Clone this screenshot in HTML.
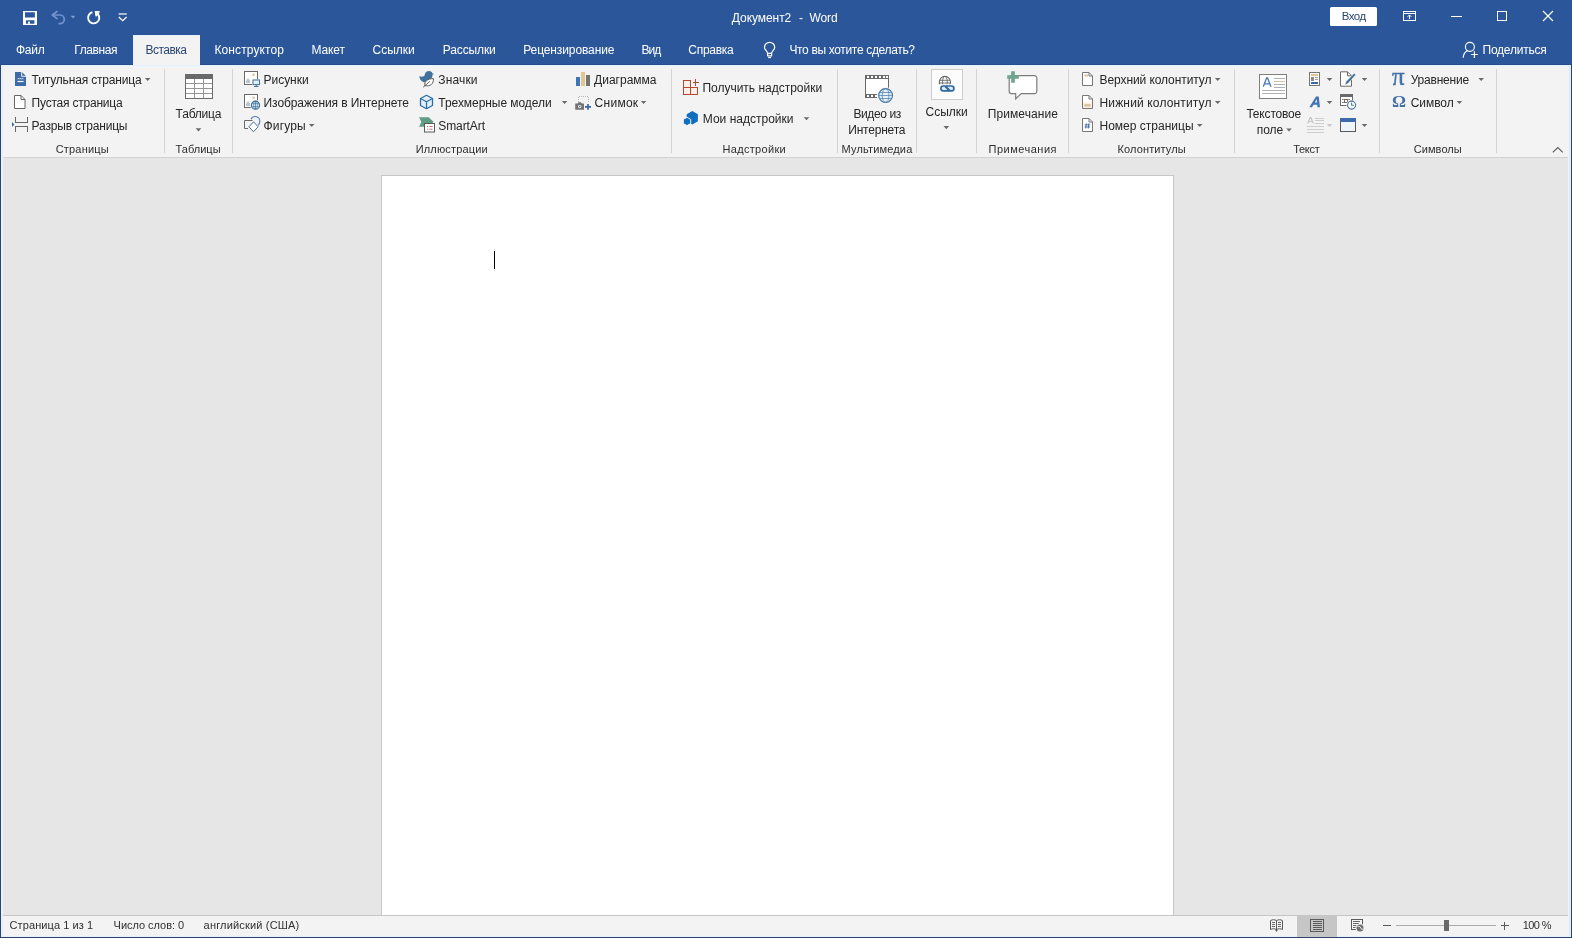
<!DOCTYPE html>
<html><head><meta charset="utf-8"><title>Word</title>
<style>
html,body{margin:0;padding:0}
body{width:1572px;height:938px;position:relative;overflow:hidden;background:#e6e6e6;font-family:"Liberation Sans",sans-serif}
.a{position:absolute}
.t{position:absolute;white-space:pre;line-height:1;font-family:"Liberation Sans",sans-serif}
#title{left:0;top:0;width:1572px;height:65px;background:#2b579a}
#tab{left:133px;top:35px;width:67px;height:30px;background:#f3f3f3;box-shadow:inset 1px 1px 0 #e6f1fb,inset -1px 0 0 #ecf3fa}
#ribbon{left:1px;top:65px;width:1570px;height:92px;background:#f3f3f3}
#rline{left:1px;top:157px;width:1570px;height:1px;background:#d2d2d2}
#page{left:381px;top:175px;width:791px;height:740px;background:#fff;border:1px solid #c6c6c6;border-bottom:none}
#sline{left:1px;top:915px;width:1570px;height:1px;background:#c6c6c6}
#status{left:1px;top:916px;width:1570px;height:21px;background:#f3f3f3}
#bl{left:0;top:65px;width:1px;height:873px;background:#2b4570}
#br{left:1571px;top:65px;width:1px;height:873px;background:#2b4570}
#bb{left:0;top:937px;width:1572px;height:1px;background:#2b4570}
.sep{position:absolute;top:69px;width:1px;height:84px;background:#d4d4d4}
#caret{left:494px;top:251px;width:1px;height:18px;background:#000}
svg{position:absolute;overflow:visible}
.sym{will-change:transform;position:absolute;line-height:1;font-family:"Liberation Serif",serif;color:#4472a8;white-space:pre}
#txt{position:absolute;left:0;top:0;width:1572px;height:938px;will-change:transform}

</style></head>
<body>
<div class="a" id="title"></div>
<div class="a" id="tab"></div>
<div class="a" id="ribbon"></div>
<div class="a" id="rline"></div>
<div class="a" id="page"></div>
<div class="a" id="caret"></div>
<div class="a" id="sline"></div>
<div class="a" id="status"></div>
<div class="a" style="left:1px;top:65px;width:1570px;height:1px;background:#e4f1fc"></div>
<div class="a" style="left:1px;top:66px;width:1570px;height:1px;background:#eef5fb"></div>
<div class="a" style="left:1px;top:65px;width:2px;height:872px;background:#e6f1fb"></div>
<div class="a" style="left:1568px;top:65px;width:3px;height:872px;background:linear-gradient(90deg,#edf3f9,#dce9f6)"></div>
<div class="a" style="left:1px;top:936px;width:1570px;height:1px;background:#e4f0fb"></div>
<div class="a" style="left:0;top:64px;width:1572px;height:1px;background:#274f90"></div>
<div class="a" style="left:133px;top:64px;width:67px;height:1px;background:#f3f3f3"></div>
<div class="a" id="bl"></div><div class="a" id="br"></div><div class="a" id="bb"></div>
<span class="sym" id="pi" style="left:1391.500px;top:64px;font-size:25px;font-weight:normal;-webkit-text-stroke:.45px #4472a8">π</span>
<span class="sym" id="om" style="left:1392px;top:92.500px;font-size:17.500px;font-weight:bold">Ω</span>
<div class="sep" style="left:164px"></div><div class="sep" style="left:232px"></div><div class="sep" style="left:671px"></div><div class="sep" style="left:837px"></div><div class="sep" style="left:916px"></div><div class="sep" style="left:976px"></div><div class="sep" style="left:1068px"></div><div class="sep" style="left:1234px"></div><div class="sep" style="left:1379px"></div><div class="sep" style="left:1496px"></div><svg class="a" style="left:0;top:0" width="1572" height="938" viewBox="0 0 1572 938" fill="none">
<!-- ===== title bar: QAT ===== -->
<g id="save" fill="#fff">
  <path d="M23 11h14v14H23z M25 12.300v5.300h9.900v-5.300z M26 20.200v3.500h8.400v-3.500z" fill-rule="evenodd"/>
  <rect x="28" y="21.600" width="2" height="2.200"/>
</g>
<g id="undo" stroke="#7394d0" stroke-width="1.700" stroke-linecap="round" stroke-linejoin="round">
  <path d="M57 11.400L52.300 15L57 18.600"/>
  <path d="M52.800 15H60a4.300 4.300 0 0 1 0 8.600h-.8"/>
</g>
<path d="M70.6 15.8h4.8l-2.4 2.8z" fill="#7f9ccf"/>
<g id="redo" stroke="#fff" stroke-width="1.900" fill="none">
  <path d="M92.400 12.300a5.600 5.600 0 1 0 5.400 1.700"/>
  <path d="M99.600 11.900h-3.800l.6 4.400" stroke-linejoin="miter" stroke-width="1.900"/>
  <path d="M95.800 11.900l2.600 2.600" stroke-width="2.200"/>
</g>
<g id="qat" stroke="#fff" stroke-width="1.2">
  <path d="M118.6 14h8.2"/>
  <path d="M118.8 17l3.9 3.7l3.9-3.7"/>
</g>
<!-- sign-in button -->
<rect x="1330" y="7" width="47" height="19" rx="1.5" fill="#fff"/>
<!-- ribbon display options -->
<g stroke="#fff" stroke-width="1" shape-rendering="crispEdges">
  <rect x="1403.5" y="11.5" width="12" height="9"/>
  <path d="M1403.5 13.5h12"/>
</g>
<path d="M1409.5 19.2v-4 M1407.6 16.8l1.9-1.9l1.9 1.9" stroke="#fff" stroke-width="1"/>
<!-- window controls -->
<path d="M1451 16.5h10.5" stroke="#fff" stroke-width="1" shape-rendering="crispEdges"/>
<rect x="1497.5" y="11.5" width="9" height="9" stroke="#fff" stroke-width="1" shape-rendering="crispEdges"/>
<path d="M1543 11l10 10M1553 11l-10 10" stroke="#fff" stroke-width="1.1"/>
<!-- lightbulb -->
<g stroke="#fff" stroke-width="1.2" stroke-linejoin="round">
  <path d="M767.600 53.400c0-2.200-3.100-3.300-3.100-6a5.100 5.100 0 0 1 10.200 0c0 2.700-3.100 3.800-3.100 6z"/>
  <path d="M767.6 53.4v2.4h4v-2.4"/>
  <path d="M768.2 57.5h2.9"/>
</g>
<!-- share -->
<g stroke="#fff" stroke-width="1.15">
  <circle cx="1469.9" cy="46.8" r="4.5"/>
  <path d="M1467.4 50.8c-2.6 1.2-4 3.8-4.2 7"/>
  <path d="M1471.2 54.5h6.5M1474.4 51.3v6.6"/>
</g>
<!-- ===== ribbon: Pages ===== -->
<!-- cover page -->
<path d="M15 72h6.200v4.800h4.800V86H15z" fill="#3f6aa8"/>
<path d="M22.200 72.300l3.500 3.500h-3.500z" fill="#3f6aa8"/>
<path d="M17.5 79.2l1-1l1 1l1-1l1 1l1-1l1 1" stroke="#fff" stroke-width=".9" fill="none"/>
<path d="M17.5 81.5h6" stroke="#fff" stroke-width="1.2"/>
<!-- blank page -->
<path d="M14.5 95.5h6.5l4 4v9H14.5z" fill="#fff" stroke="#666" stroke-width="1"/>
<path d="M21 95.5v4h4" stroke="#666" stroke-width="1"/>
<!-- page break -->
<g stroke="#666" stroke-width="1" shape-rendering="crispEdges">
  <path d="M15.5 117v5.5h12V117"/>
  <path d="M15.5 132v-5.500h12V132"/>
</g>
<path d="M12 122l2.400 2.500L12 127z" fill="#3f6aa8"/>
<!-- ===== Table ===== -->
<g shape-rendering="crispEdges">
  <rect x="185" y="74" width="28" height="25" fill="#fff"/>
  <rect x="185" y="74" width="28" height="5" fill="#6a6a6a"/>
  <path d="M185.500 74v24.500h27V74" stroke="#6a6a6a"/>
  <path d="M186 83.500h26M186 88.500h26M186 93.500h26M194.500 79v19M203.500 79v19" stroke="#969696"/>
</g>
<!-- ===== Illustrations ===== -->
<!-- pictures -->
<g id="pic1">
  <rect x="244.500" y="71.500" width="13" height="13" fill="#fff" stroke="#6a6a6a"/>
  <path d="M246 83v-2.200l2-2.800l2.200 2.800v2.200z" fill="#b8c4d2"/>
  <circle cx="253.500" cy="74.700" r="1.300" fill="#d9c39b"/>
  <rect x="252" y="79.200" width="8.400" height="7" fill="#f3f3f3"/>
  <rect x="253" y="80" width="6.500" height="4.600" fill="#e3f0fb" stroke="#41719c"/>
  <path d="M256.200 84.600v1.600M254 86.500h4.500" stroke="#41719c"/>
</g>
<!-- online pictures -->
<g id="pic2">
  <rect x="244.500" y="94.500" width="13" height="13" fill="#fff" stroke="#6a6a6a"/>
  <path d="M246 106v-2.200l2-2.800l2.200 2.800v2.200z" fill="#b8c4d2"/>
  <circle cx="253.500" cy="97.700" r="1.300" fill="#d9c39b"/>
  <circle cx="255.500" cy="105.200" r="5.400" fill="#f3f3f3"/>
  <circle cx="255.500" cy="105.200" r="4.100" fill="#dcebf7" stroke="#41719c" stroke-width="1.100"/>
  <path d="M251.700 103.700h7.600M251.700 106.700h7.600M255.500 101v8.400" stroke="#41719c" stroke-width=".7"/>
  <ellipse cx="255.500" cy="105.200" rx="2" ry="4.100" stroke="#41719c" stroke-width=".6"/>
</g>
<!-- shapes -->
<g id="shapes">
  <path d="M252.500 120.500h-8v8h3.500" stroke="#6a6a6a"/>
  <path d="M251 119.200a4.600 4.600 0 0 1 8.600 3.200a6 6 0 0 1 -1.600 3" stroke="#5a7fb0" stroke-width="1.200"/>
  <path d="M253.500 121.800l4.600 5l-4.600 5l-4.600-5z" fill="#fff" stroke="#41719c" stroke-width="1"/>
</g>
<!-- icons (bird + leaf) -->
<g id="iconsicon">
  <path d="M419.300 76.200c1.800.8 3.600.6 5.200-.4c.2-2.800 2-4.800 4.600-4.800c1.800 0 3 1 3.400 2.400l1.400.6l-1.400.8c0 4.400-3.400 7.400-7.400 7.400c-3.200 0-5.400-2.600-5.800-6z" fill="#41719c"/>
  <path d="M424.800 85.600c-.6-4 2.600-7 8.600-7c.4 5.200-3.200 8.200-8.600 7z" fill="#fff" stroke="#5a5a5a" stroke-width="1"/>
  <path d="M423.200 87.200l6.600-5.800" stroke="#5a5a5a" stroke-width="1"/>
</g>
<!-- 3d models -->
<g id="cube" stroke="#2e6ca4" stroke-width="1.300" stroke-linejoin="round">
  <path d="M426.500 95.300l6 3.200v7l-6 3.200l-6-3.200v-7z" fill="#e2f0fb"/>
  <path d="M420.500 98.500l6 3.200l6-3.200M426.500 101.700v7" />
</g>
<!-- smartart -->
<g id="smartart">
  <path d="M419 117.200h9.600l5 4.600l-1.800 1.800h-7.400v3.200h-5.400l2.400-4.800z" fill="#5f9b85"/>
  <rect x="424.500" y="123.500" width="10" height="8.500" fill="#fff" stroke="#5a5a5a"/>
  <path d="M427 126.500h1.200M429.400 126.500h3.200M427 129.200h1.200M429.400 129.200h3.200" stroke="#c9737a" stroke-width="1"/>
</g>
<!-- chart -->
<g shape-rendering="crispEdges">
  <rect x="576" y="77" width="4" height="9" fill="#3a76b8"/>
  <rect x="581" y="72" width="4" height="14" fill="#e6c48f"/>
  <rect x="586" y="75" width="4" height="11" fill="#737373"/>
</g>
<!-- screenshot -->
<g id="shot">
  <path d="M578.500 102v-5.500h10v6" stroke="#b8b8b8" stroke-dasharray="1 1" shape-rendering="crispEdges"/>
  <path d="M575.200 103.600h2.400l.8-1.400h2.600l.8 1.400h2.200v6.200h-8.800z" fill="#737373"/>
  <circle cx="579.700" cy="106.600" r="1.700" fill="#f3f3f3"/>
  <circle cx="579.700" cy="106.600" r=".8" fill="#737373"/>
  <path d="M585 106.900h6M588 104v5.800" stroke="#3a66a6" stroke-width="1.700"/>
</g>
<!-- ===== Add-ins ===== -->
<g shape-rendering="crispEdges" stroke="#b5492f" fill="#fdeee8">
  <rect x="683.500" y="80.500" width="7" height="7"/>
  <rect x="683.500" y="87.500" width="7" height="7"/>
  <rect x="690.500" y="87.500" width="7" height="7"/>
  <path d="M692.500 82.500h6.500M695.500 79v6.500" fill="none"/>
</g>
<g id="myaddins">
  <path d="M692.300 111l5.600 3.200v7l-5.600 3.400l-5.600-3.400v-7z" fill="#106ebe"/>
  <path d="M687 117.300l3.700 2.100v4.100l-3.700 2.100l-3.700-2.100v-4.100z" fill="#106ebe" stroke="#eaf3fb" stroke-width="1"/>
</g>
<!-- ===== Online video ===== -->
<g id="video">
  <rect x="865" y="75" width="24" height="23" fill="#fff"/>
  <g shape-rendering="crispEdges">
    <rect x="865" y="75" width="24" height="4" fill="#6a6a6a"/>
    <rect x="865" y="94" width="12" height="4" fill="#6a6a6a"/>
    <path d="M865.500 75v23M888.500 75v14" stroke="#6a6a6a"/>
    <path d="M867 76h2v2h-2zM871 76h2v2h-2zM875 76h2v2h-2zM879 76h2v2h-2zM883 76h2v2h-2zM886 76h2v2h-2zM867 95h2v2h-2zM871 95h2v2h-2zM875 95h2v2h-2z" fill="#fff" stroke="none"/>
  </g>
  <circle cx="885.600" cy="95.500" r="8.300" fill="#f3f3f3"/>
  <circle cx="885.600" cy="95.500" r="6.900" fill="#e2f0fb" stroke="#41719c" stroke-width="1.100"/>
  <ellipse cx="885.600" cy="95.500" rx="3.400" ry="6.900" stroke="#5b88b5" stroke-width=".8"/>
  <path d="M879.600 92.500h12M878.800 95.500h13.600M879.600 98.500h12" stroke="#5b88b5" stroke-width=".8"/>
</g>
<!-- ===== Links ===== -->
<rect x="931.500" y="69.500" width="31" height="30" fill="#fcfcfc" stroke="#cdcdcd" shape-rendering="crispEdges"/>
<g id="linkicon">
  <clipPath id="domeclip"><rect x="936" y="74" width="18" height="10.300"/></clipPath>
  <g clip-path="url(#domeclip)" stroke="#6a6a6a">
    <circle cx="944.900" cy="82" r="5.600" stroke-width="1.100"/>
    <ellipse cx="944.900" cy="82" rx="2.400" ry="5.600" stroke-width=".9"/>
    <path d="M940 80.300h10M939.400 83h11" stroke-width=".9"/>
  </g>
  <rect x="940.900" y="86" width="13" height="4.900" rx="2.450" fill="#dcecfa" stroke="#33679f" stroke-width="1.700"/>
  <path d="M945.300 86.300l4.200 4.300" stroke="#33679f" stroke-width="2.200"/>
</g>
<!-- ===== Comment ===== -->
<g id="comment">
  <path d="M1011.500 75.700h23a2.300 2.300 0 0 1 2.300 2.300v13.300a2.300 2.300 0 0 1 -2.300 2.300h-13.200l-5.600 5.200v-5.200h-4.200a2.300 2.300 0 0 1 -2.300-2.300v-13.300a2.300 2.300 0 0 1 2.300-2.300z" fill="#fff" stroke="#7c7c7c" stroke-width="1.200"/>
  <path d="M1007.200 77h11.600M1013 71.200v11.600" stroke="#6fa490" stroke-width="3.700"/>
</g>
<!-- ===== Header & Footer ===== -->
<g id="hdr" stroke="#777" fill="#fff">
  <path d="M1082.500 72.500h6.500l3.500 3.500v9.500h-10z"/>
  <path d="M1089 72.500v3.500h3.500" fill="none"/>
  <rect x="1084.400" y="74.600" width="3.600" height="1.800" fill="#d8bf9c" stroke="none"/>
</g>
<g id="ftr" stroke="#777" fill="#fff">
  <path d="M1082.500 95.500h6.500l3.500 3.500v9.500h-10z"/>
  <path d="M1089 95.500v3.500h3.500" fill="none"/>
  <rect x="1083" y="102.500" width="9" height="5.500" fill="#fbeee2" stroke="none"/>
  <rect x="1084.400" y="104.200" width="6.200" height="2.300" fill="#d8bf9c" stroke="none"/>
</g>
<g id="pgn" stroke="#777" fill="#fff">
  <path d="M1082.500 118.500h6.500l3.500 3.500v9.500h-10z"/>
  <path d="M1089 118.500v3.500h3.500" fill="none"/>
  <path d="M1086.300 123.300l-.5 5.200M1088.800 123.300l-.5 5.200M1084.700 124.900h5.500M1084.500 127h5.500" stroke="#3f6aa8" stroke-width=".9" fill="none"/>
</g>
<!-- ===== Text group ===== -->
<g id="textbox">
  <rect x="1259.500" y="74.500" width="27" height="24" fill="#fff" stroke="#808080" shape-rendering="crispEdges"/>
  <path d="M1263.300 86.700l3.300-8.700h1l3.300 8.700M1264.500 83.800h5.500" stroke="#4a7ab5" stroke-width="1.300"/>
  <g shape-rendering="crispEdges" stroke="#b0b0b0">
    <path d="M1273.500 78.500h11M1273.500 84.500h11M1273.500 87.500h11M1262 90.500h22.500M1262 93.500h22.500"/>
    <path d="M1273.500 81.500h11" stroke="#d5c3a6"/>
  </g>
</g>
<!-- quick parts -->
<g id="qp" shape-rendering="crispEdges">
  <rect x="1309.500" y="72.500" width="10" height="13" fill="#fff" stroke="#777"/>
  <rect x="1311" y="74" width="7" height="1.500" fill="#e3c58f"/>
  <rect x="1311" y="77" width="2.500" height="3.500" fill="#8a8a8a"/>
  <path d="M1314.500 77.500h3.500M1314.500 79.500h3.500" stroke="#9a9a9a"/>
  <rect x="1311" y="82" width="7" height="1.700" fill="#3f6aa8"/>
</g>
<!-- signature line -->
<g id="sig">
  <path d="M1340.500 71.800h7l4 4v10.400h-11z" fill="#fff" stroke="#6a6a6a"/>
  <path d="M1347.500 71.800v4h4" stroke="#6a6a6a"/>
  <path d="M1355.800 74.800l-1.600-1.600l-8.200 8.400l-1.200 3.400l3.200-1.400z" fill="#41719c" stroke="#f3f3f3" stroke-width=".6"/>
</g>
<!-- wordart -->
<path d="M1309.300 107.300l6.700-10.700h2.700l1.300 10.700h-2.500l-.3-2.600h-3.700l-1.500 2.600z M1314.800 102.600h2.200l-.4-3.700z" fill="#3f73b3" fill-rule="evenodd"/>
<!-- date & time -->
<g id="datetime">
  <g shape-rendering="crispEdges">
    <rect x="1340.500" y="94.500" width="12" height="11" fill="#fff" stroke="#6a6a6a"/>
    <rect x="1340" y="94" width="13" height="3" fill="#6a6a6a"/>
    <path d="M1342 99.500h9M1342 102.500h5" stroke="#8a8a8a" stroke-dasharray="2 1"/>
    <rect x="1344.500" y="99.500" width="3" height="3" fill="#fff" stroke="#7a6a5a"/>
  </g>
  <circle cx="1351.600" cy="105.100" r="5.200" fill="#f3f3f3"/>
  <circle cx="1351.600" cy="105.100" r="4" fill="#fff" stroke="#41719c" stroke-width="1.100"/>
  <path d="M1351.600 102.600v2.700h2.200" stroke="#41719c" stroke-width="1"/>
</g>
<!-- drop cap (disabled) -->
<g id="dropcap" stroke="#c4c4c4">
  <path d="M1307.600 123.500l2.500-6h.8l2.500 6M1308.600 121.500h3.800" stroke-width="1.100"/>
  <g shape-rendering="crispEdges"><path d="M1315 118.500h8.500M1315 120.500h8.500M1315 123.500h8.500M1306.800 126.500h16.700M1306.800 129.500h16.700M1306.800 132.500h16.700" stroke="#cdcdcd"/></g>
</g>
<!-- object -->
<g shape-rendering="crispEdges">
  <rect x="1340.500" y="118.500" width="15" height="13" fill="#eef5fb" stroke="#5a5a5a"/>
  <rect x="1340" y="118" width="16" height="4" fill="#3d6baa"/>
  <path d="M1340 131.500h16" stroke="#5a5a5a" stroke-width="1"/>
</g>
<!-- ===== status bar icons ===== -->
<rect x="1297" y="916" width="40" height="21" fill="#c6c6c6"/>
<g id="readmode" stroke="#5a5a5a" stroke-width="1">
  <path d="M1276.500 920.500c-2-1-4-1-6 0v9c2-1 4-1 6 0c2-1 4-1 6 0v-9c-2-1-4-1-6 0zM1276.500 920.500v11" fill="#f3f3f3"/>
  <path d="M1272 922.500h3M1272 924.500h3M1272 926.500h3M1278 922.500h3M1278 924.500h3M1278 926.500h3" stroke-width=".9"/>
  <path d="M1275 930l1.500 1.600l1.500-1.600" fill="#5a5a5a" stroke="none"/>
</g>
<g shape-rendering="crispEdges" stroke="#5a5a5a">
  <rect x="1310.500" y="919.500" width="13" height="12" fill="none"/>
  <path d="M1312.500 921.500h9M1312.500 923.500h9M1312.500 925.500h9M1312.500 927.500h9M1312.500 929.500h9"/>
</g>
<g id="weblayout">
  <g shape-rendering="crispEdges" stroke="#5a5a5a"><path d="M1362 926v-6.500h-11v10h5.500" fill="none"/>
  <path d="M1353 921.500h7M1353 923.500h6M1353 925.500h4M1353 927.500h3" stroke="#6a6a6a"/></g>
  <circle cx="1360" cy="928" r="4.500" fill="#f3f3f3"/>
  <circle cx="1360" cy="928" r="3.500" fill="#707070"/>
  <path d="M1357.600 926.600c1.400-.8 2.800 0 3.200 1.400c.4 1.200 1.600 1.600 2.400 1" stroke="#f3f3f3" stroke-width="1" fill="none"/>
</g>
<!-- zoom slider -->
<g shape-rendering="crispEdges">
  <path d="M1382.500 925.500h8" stroke="#5a5a5a"/>
  <path d="M1396 925.500h100" stroke="#ababab"/>
  <rect x="1444" y="920" width="5" height="11" fill="#6a6a6a"/>
  <path d="M1501 925.500h8M1504.500 922v8" stroke="#5a5a5a"/>
</g>
<!-- collapse ribbon chevron -->
<path d="M1552.800 152.400l5-4.800l5 4.800" stroke="#5a5a5a" stroke-width="1.100"/>
<path d="M144.9 78.0h5.6l-2.8 3.100z" fill="#6a6a6a"/><path d="M195.7 128.3h5.6l-2.8 3.100z" fill="#6a6a6a"/><path d="M308.9 124.0h5.6l-2.8 3.100z" fill="#6a6a6a"/><path d="M561.8 101.0h5.6l-2.8 3.100z" fill="#6a6a6a"/><path d="M640.8 101.0h5.6l-2.8 3.100z" fill="#6a6a6a"/><path d="M803.7 117.2h5.6l-2.8 3.100z" fill="#6a6a6a"/><path d="M943.5 126.1h5.6l-2.8 3.100z" fill="#6a6a6a"/><path d="M1214.9 78.0h5.6l-2.8 3.100z" fill="#6a6a6a"/><path d="M1214.9 101.0h5.6l-2.8 3.100z" fill="#6a6a6a"/><path d="M1196.9 124.0h5.6l-2.8 3.100z" fill="#6a6a6a"/><path d="M1286.2 128.4h5.6l-2.8 3.100z" fill="#6a6a6a"/><path d="M1326.7 78.0h5.6l-2.8 3.100z" fill="#6a6a6a"/><path d="M1326.7 101.0h5.6l-2.8 3.100z" fill="#6a6a6a"/><path d="M1361.7 78.0h5.6l-2.8 3.100z" fill="#6a6a6a"/><path d="M1361.7 124.0h5.6l-2.8 3.100z" fill="#6a6a6a"/><path d="M1478.4 78.0h5.6l-2.8 3.100z" fill="#6a6a6a"/><path d="M1456.6 101.0h5.6l-2.8 3.100z" fill="#6a6a6a"/><path d="M1326.700 124h5.600l-2.800 3.100z" fill="#c8c8c8"/></svg>
<div id="txt">
<span class="t" style="left:731.8px;top:11.84px;font-size:12px;letter-spacing:-0.051px;color:#fff">Документ2</span>
<span class="t" style="left:799.0px;top:11.84px;font-size:12px;letter-spacing:-0.600px;color:#fff">-</span>
<span class="t" style="left:809.4px;top:11.84px;font-size:12px;letter-spacing:-0.051px;color:#fff">Word</span>
<span class="t" style="left:1341.8px;top:11.27px;font-size:11.5px;letter-spacing:-0.572px;color:#2b4673">Вход</span>
<span class="t" style="left:15.9px;top:43.84px;font-size:12px;letter-spacing:-0.172px;color:#fff">Файл</span>
<span class="t" style="left:74.2px;top:43.84px;font-size:12px;letter-spacing:-0.381px;color:#fff">Главная</span>
<span class="t" style="left:214.4px;top:43.84px;font-size:12px;letter-spacing:0.118px;color:#fff">Конструктор</span>
<span class="t" style="left:311.5px;top:43.84px;font-size:12px;letter-spacing:-0.117px;color:#fff">Макет</span>
<span class="t" style="left:372.5px;top:43.84px;font-size:12px;letter-spacing:-0.010px;color:#fff">Ссылки</span>
<span class="t" style="left:442.7px;top:43.84px;font-size:12px;letter-spacing:-0.108px;color:#fff">Рассылки</span>
<span class="t" style="left:523.2px;top:43.84px;font-size:12px;letter-spacing:-0.106px;color:#fff">Рецензирование</span>
<span class="t" style="left:641.5px;top:43.84px;font-size:12px;letter-spacing:-1.009px;color:#fff">Вид</span>
<span class="t" style="left:688.3px;top:43.84px;font-size:12px;letter-spacing:-0.280px;color:#fff">Справка</span>
<span class="t" style="left:789.4px;top:43.84px;font-size:12px;letter-spacing:-0.336px;color:#fff">Что вы хотите сделать?</span>
<span class="t" style="left:1482.5px;top:43.84px;font-size:12px;letter-spacing:-0.230px;color:#fff">Поделиться</span>
<span class="t" style="left:145.6px;top:43.84px;font-size:12px;letter-spacing:-0.552px;color:#2b4673">Вставка</span>
<span class="t" style="left:31.6px;top:73.84px;font-size:12px;letter-spacing:-0.170px;color:#262626">Титульная страница</span>
<span class="t" style="left:31.6px;top:96.84px;font-size:12px;letter-spacing:-0.220px;color:#262626">Пустая страница</span>
<span class="t" style="left:31.6px;top:119.84px;font-size:12px;letter-spacing:-0.173px;color:#262626">Разрыв страницы</span>
<span class="t" style="left:263.6px;top:73.84px;font-size:12px;letter-spacing:-0.049px;color:#262626">Рисунки</span>
<span class="t" style="left:263.6px;top:96.84px;font-size:12px;letter-spacing:-0.094px;color:#262626">Изображения в Интернете</span>
<span class="t" style="left:263.6px;top:119.84px;font-size:12px;letter-spacing:0.125px;color:#262626">Фигуры</span>
<span class="t" style="left:438.3px;top:73.84px;font-size:12px;letter-spacing:0.140px;color:#262626">Значки</span>
<span class="t" style="left:438.3px;top:96.84px;font-size:12px;letter-spacing:-0.053px;color:#262626">Трехмерные модели</span>
<span class="t" style="left:438.3px;top:119.84px;font-size:12px;letter-spacing:-0.092px;color:#262626">SmartArt</span>
<span class="t" style="left:594.1px;top:73.84px;font-size:12px;letter-spacing:-0.001px;color:#262626">Диаграмма</span>
<span class="t" style="left:594.6px;top:96.84px;font-size:12px;letter-spacing:0.266px;color:#262626">Снимок</span>
<span class="t" style="left:702.4px;top:81.84px;font-size:12px;letter-spacing:-0.005px;color:#262626">Получить надстройки</span>
<span class="t" style="left:702.8px;top:112.84px;font-size:12px;letter-spacing:0.003px;color:#262626">Мои надстройки</span>
<span class="t" style="left:1099.5px;top:73.84px;font-size:12px;letter-spacing:-0.082px;color:#262626">Верхний колонтитул</span>
<span class="t" style="left:1099.5px;top:96.84px;font-size:12px;letter-spacing:0.151px;color:#262626">Нижний колонтитул</span>
<span class="t" style="left:1099.5px;top:119.84px;font-size:12px;letter-spacing:0.011px;color:#262626">Номер страницы</span>
<span class="t" style="left:1410.7px;top:73.84px;font-size:12px;letter-spacing:-0.203px;color:#262626">Уравнение</span>
<span class="t" style="left:1410.7px;top:96.84px;font-size:12px;letter-spacing:-0.056px;color:#262626">Символ</span>
<span class="t" style="left:175.6px;top:107.84px;font-size:12px;letter-spacing:-0.210px;color:#262626">Таблица</span>
<span class="t" style="left:853.4px;top:107.84px;font-size:12px;letter-spacing:-0.401px;color:#262626">Видео из</span>
<span class="t" style="left:848.3px;top:123.84px;font-size:12px;letter-spacing:-0.213px;color:#262626">Интернета</span>
<span class="t" style="left:925.6px;top:105.84px;font-size:12px;letter-spacing:-0.030px;color:#262626">Ссылки</span>
<span class="t" style="left:987.8px;top:107.84px;font-size:12px;letter-spacing:0.070px;color:#262626">Примечание</span>
<span class="t" style="left:1246.4px;top:107.84px;font-size:12px;letter-spacing:-0.180px;color:#262626">Текстовое</span>
<span class="t" style="left:1256.7px;top:123.84px;font-size:12px;letter-spacing:0.002px;color:#262626">поле</span>
<span class="t" style="left:55.7px;top:143.69px;font-size:11px;letter-spacing:0.192px;color:#2e2e2e">Страницы</span>
<span class="t" style="left:175.6px;top:143.69px;font-size:11px;letter-spacing:0.013px;color:#2e2e2e">Таблицы</span>
<span class="t" style="left:415.7px;top:143.69px;font-size:11px;letter-spacing:0.154px;color:#2e2e2e">Иллюстрации</span>
<span class="t" style="left:722.5px;top:143.69px;font-size:11px;letter-spacing:0.316px;color:#2e2e2e">Надстройки</span>
<span class="t" style="left:841.6px;top:143.69px;font-size:11px;letter-spacing:0.156px;color:#2e2e2e">Мультимедиа</span>
<span class="t" style="left:988.6px;top:143.69px;font-size:11px;letter-spacing:0.487px;color:#2e2e2e">Примечания</span>
<span class="t" style="left:1117.5px;top:143.69px;font-size:11px;letter-spacing:0.125px;color:#2e2e2e">Колонтитулы</span>
<span class="t" style="left:1293.2px;top:143.69px;font-size:11px;letter-spacing:-0.301px;color:#2e2e2e">Текст</span>
<span class="t" style="left:1413.7px;top:143.69px;font-size:11px;letter-spacing:0.087px;color:#2e2e2e">Символы</span>
<span class="t" style="left:9.6px;top:919.69px;font-size:11px;letter-spacing:0.082px;color:#303030">Страница 1 из 1</span>
<span class="t" style="left:113.6px;top:919.69px;font-size:11px;letter-spacing:-0.028px;color:#303030">Число слов: 0</span>
<span class="t" style="left:203.6px;top:919.69px;font-size:11px;letter-spacing:0.171px;color:#303030">английский (США)</span>
<span class="t" style="left:1522.7px;top:919.69px;font-size:11px;letter-spacing:-0.576px;color:#303030">100 %</span>
</div>
</body></html>
